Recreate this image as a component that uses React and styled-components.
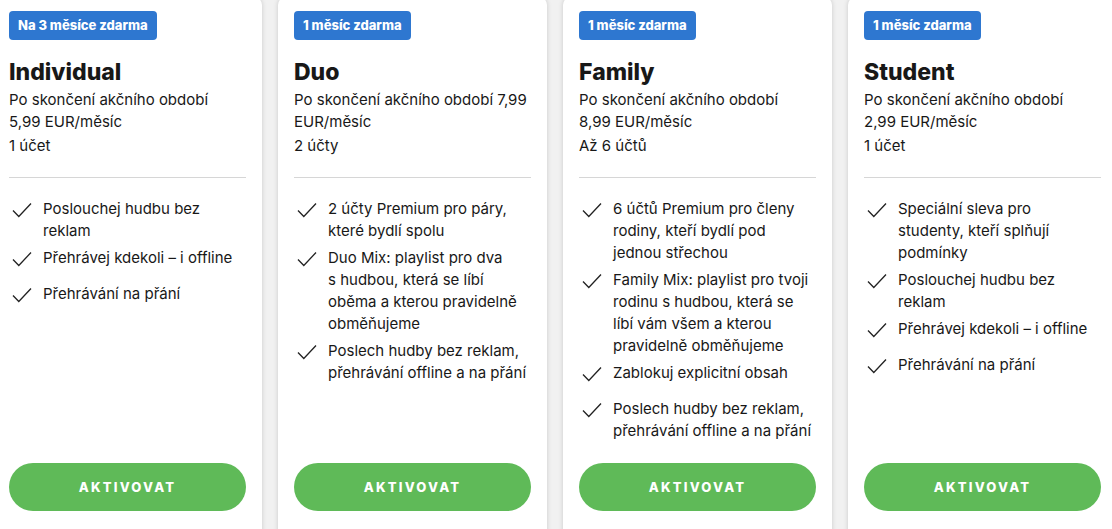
import styled, { createGlobalStyle } from "styled-components";

const GlobalStyle = createGlobalStyle`
  body {
    margin: 0;
    background: #f1f1f1;
    overflow: hidden;
    font-family: Inter, "Liberation Sans", sans-serif;
    color: #181818;
  }
`;

const plans = [
  {
    badge: "Na 3 měsíce zdarma",
    name: "Individual",
    price: ["Po skončení akčního období", "5,99 EUR/měsíc"],
    accounts: "1 účet",
    features: [
      ["Poslouchej hudbu bez", "reklam"],
      ["Přehrávej kdekoli – i offline"],
      ["Přehrávání na přání"],
    ],
  },
  {
    badge: "1 měsíc zdarma",
    name: "Duo",
    price: ["Po skončení akčního období 7,99", "EUR/měsíc"],
    accounts: "2 účty",
    features: [
      ["2 účty Premium pro páry,", "které bydlí spolu"],
      ["Duo Mix: playlist pro dva", "s hudbou, která se líbí", "oběma a kterou pravidelně", "obměňujeme"],
      ["Poslech hudby bez reklam,", "přehrávání offline a na přání"],
    ],
  },
  {
    badge: "1 měsíc zdarma",
    name: "Family",
    price: ["Po skončení akčního období", "8,99 EUR/měsíc"],
    accounts: "Až 6 účtů",
    features: [
      ["6 účtů Premium pro členy", "rodiny, kteří bydlí pod", "jednou střechou"],
      ["Family Mix: playlist pro tvoji", "rodinu s hudbou, která se", "líbí vám všem a kterou", "pravidelně obměňujeme"],
      ["Zablokuj explicitní obsah"],
      ["Poslech hudby bez reklam,", "přehrávání offline a na přání"],
    ],
  },
  {
    badge: "1 měsíc zdarma",
    name: "Student",
    price: ["Po skončení akčního období", "2,99 EUR/měsíc"],
    accounts: "1 účet",
    features: [
      ["Speciální sleva pro", "studenty, kteří splňují", "podmínky"],
      ["Poslouchej hudbu bez", "reklam"],
      ["Přehrávej kdekoli – i offline"],
      ["Přehrávání na přání"],
    ],
  },
];

const Row = styled.div`
  display: flex;
  gap: 16px;
  margin: -3px 0 0 -7px;
`;

const Card = styled.section`
  flex: 0 0 269px;
  box-sizing: border-box;
  height: 545px;
  padding: 14px 16px 0;
  background: #fff;
  border-radius: 8px;
  box-shadow: 0 0 5px rgba(0, 0, 0, 0.16);
  display: flex;
  flex-direction: column;
`;

const Badge = styled.span`
  align-self: flex-start;
  height: 29px;
  line-height: 29px;
  padding: 0 9px;
  border-radius: 4px;
  background: #2e77d0;
  color: #fff;
  font-size: 13px;
  font-weight: 800;
`;

const Title = styled.h2`
  margin: 17px 0 2px;
  font-size: 23px;
  line-height: 30px;
  font-weight: 800;
`;

const Text = styled.p`
  margin: ${(p) => (p.$gap ? "2px" : "0")} 0 0;
  font-size: 15px;
  line-height: 22px;
  white-space: nowrap;
`;

const Divider = styled.hr`
  margin: 20px 0 20px;
  border: 0;
  border-top: 1px solid #d6d6d6;
`;

const List = styled.ul`
  list-style: none;
  margin: 0;
  padding: 0;
  display: flex;
  flex-direction: column;
  gap: 5px;
`;

const Item = styled.li`
  display: flex;
  min-height: 31px;
  font-size: 15px;
  line-height: 22px;
  white-space: nowrap;
`;

const CheckBox = styled.span`
  flex: 0 0 34px;
  padding: 4px 0 0 3px;
  box-sizing: border-box;
`;

const Button = styled.button`
  margin-top: auto;
  margin-bottom: 31px;
  height: 48px;
  border: 0;
  border-radius: 24px;
  background: #5fba58;
  color: #fff;
  font-family: inherit;
  font-size: 13px;
  font-weight: 800;
  letter-spacing: 2.2px;
`;

function Check() {
  return (
    <svg width="20" height="16" viewBox="0 0 20 16">
      <path d="M1 8.5 L6.8 14.5 L19 1.5" fill="none" stroke="#222" strokeWidth="1.3" />
    </svg>
  );
}

export default function App() {
  return (
    <>
      <GlobalStyle />
      <Row>
        {plans.map((plan) => (
          <Card key={plan.name}>
            <Badge>{plan.badge}</Badge>
            <Title>{plan.name}</Title>
            <Text>
              {plan.price[0]}
              <br />
              {plan.price[1]}
            </Text>
            <Text $gap>{plan.accounts}</Text>
            <Divider />
            <List>
              {plan.features.map((lines, i) => (
                <Item key={i}>
                  <CheckBox>
                    <Check />
                  </CheckBox>
                  <span>
                    {lines.map((l, j) => (
                      <span key={j}>
                        {j > 0 && <br />}
                        {l}
                      </span>
                    ))}
                  </span>
                </Item>
              ))}
            </List>
            <Button>AKTIVOVAT</Button>
          </Card>
        ))}
      </Row>
    </>
  );
}
